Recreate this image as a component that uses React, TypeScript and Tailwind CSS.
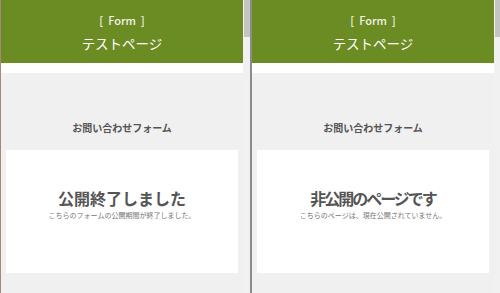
import React from 'react'

const font = { fontFamily: '"Noto Sans CJK JP", "Noto Sans", sans-serif' }

function FormPanel({ title, message, tight }: { title: string; message: string; tight?: boolean }) {
  return (
    <div className="flex w-[242px] shrink-0 flex-col bg-[#f0f0f0]">
      <div className="flex h-[63px] flex-col items-center bg-[#6b8b23] pt-[13px]">
        <p className="text-[11px] font-medium leading-[14px] text-[#f3f3e6]">
          <span>[</span>
          <span className="mx-[5px]">Form</span>
          <span>]</span>
        </p>
        <h1 className="mt-[7px] text-[13.5px] leading-[18px] text-white">テストページ</h1>
      </div>
      <div className="h-[10px] bg-white" />
      <p className="pt-[48px] text-center text-[10px] font-bold leading-[14px] text-[#555]">
        お問い合わせフォーム
      </p>
      <div className="mx-[5px] mt-[15px] flex h-[123px] flex-col items-center bg-white pt-[40px]">
        <h2
          className={`text-[16px] font-bold leading-[16px] text-[#555] ${tight ? 'tracking-[-2px]' : ''}`}
        >
          {title}
        </h2>
        <p className="mt-[5px] text-[7px] leading-[8px] text-[#777]">{message}</p>
      </div>
    </div>
  )
}

function Scrollbar({ width }: { width: string }) {
  return (
    <div className={`flex shrink-0 flex-col bg-[#f1f1f1] ${width}`}>
      <div className="ml-[1px] h-[37px] bg-[#c4c4c4]" />
    </div>
  )
}

export default function App() {
  return (
    <div className="flex h-[293px] w-[500px] overflow-hidden bg-[#f0f0f0]" style={font}>
      <div className="flex w-[250px] shrink-0 border-l border-[#a88878]">
        <FormPanel title="公開終了しました" message="こちらのフォームの公開期間が終了しました。" />
        <Scrollbar width="w-[7px]" />
      </div>
      <div className="w-[2px] shrink-0 bg-[#8c8c8c]" />
      <div className="flex w-[248px] shrink-0">
        <FormPanel title="非公開のページです" message="こちらのページは、現在公開されていません。" tight />
        <Scrollbar width="w-[6px]" />
      </div>
    </div>
  )
}
